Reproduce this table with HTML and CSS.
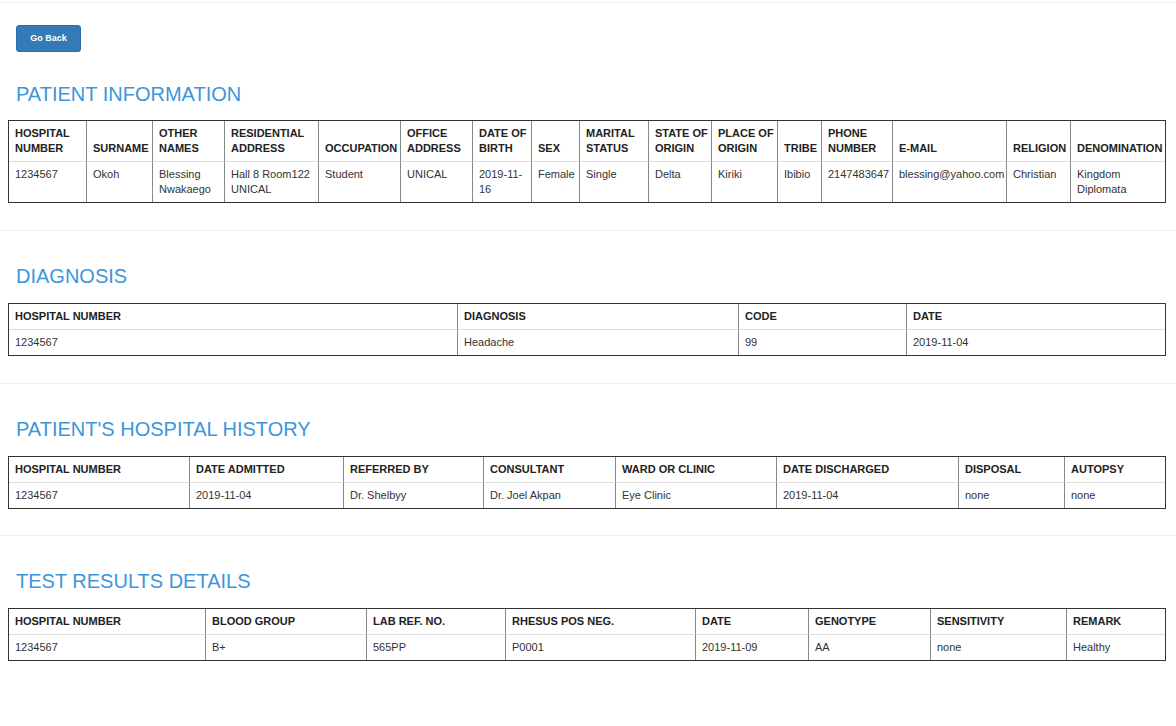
FILE: index.html
```html
<!DOCTYPE html>
<html>
<head>
<meta charset="utf-8">
<title>Patient</title>
<link rel="stylesheet" href="styles.css">
</head>
<body>
<hr class="rule rule-top">
<div class="actions"><button class="btn">Go Back</button></div>

<section class="block block-first">
  <h3 class="title">PATIENT INFORMATION</h3>
  <div class="wrap">
    <table class="grid info">
      <thead><tr>
        <th class="c1">HOSPITAL<br>NUMBER</th><th class="c2">SURNAME</th><th class="c3">OTHER<br>NAMES</th><th class="c4">RESIDENTIAL<br>ADDRESS</th><th class="c5">OCCUPATION</th><th class="c6">OFFICE<br>ADDRESS</th><th class="c7">DATE OF<br>BIRTH</th><th class="c8">SEX</th><th class="c9">MARITAL<br>STATUS</th><th class="c10">STATE OF<br>ORIGIN</th><th class="c11">PLACE OF<br>ORIGIN</th><th class="c12">TRIBE</th><th class="c13">PHONE<br>NUMBER</th><th class="c14">E-MAIL</th><th class="c15">RELIGION</th><th class="c16">DENOMINATION</th>
      </tr></thead>
      <tbody><tr>
        <td>1234567</td><td>Okoh</td><td>Blessing<br>Nwakaego</td><td>Hall 8 Room122<br>UNICAL</td><td>Student</td><td>UNICAL</td><td>2019-11-<br>16</td><td>Female</td><td>Single</td><td>Delta</td><td>Kiriki</td><td>Ibibio</td><td>2147483647</td><td>blessing@yahoo.com</td><td>Christian</td><td>Kingdom<br>Diplomata</td>
      </tr></tbody>
    </table>
  </div>
</section>
<hr class="rule">

<section class="block">
  <h3 class="title">DIAGNOSIS</h3>
  <div class="wrap">
    <table class="grid">
      <thead><tr><th class="d1">HOSPITAL NUMBER</th><th class="d2">DIAGNOSIS</th><th class="d3">CODE</th><th class="d4">DATE</th></tr></thead>
      <tbody><tr><td>1234567</td><td>Headache</td><td>99</td><td>2019-11-04</td></tr></tbody>
    </table>
  </div>
</section>
<hr class="rule">

<section class="block block-history">
  <h3 class="title">PATIENT'S HOSPITAL HISTORY</h3>
  <div class="wrap">
    <table class="grid">
      <thead><tr><th class="h1c">HOSPITAL NUMBER</th><th class="h2c">DATE ADMITTED</th><th class="h3c">REFERRED BY</th><th class="h4c">CONSULTANT</th><th class="h5c">WARD OR CLINIC</th><th class="h6c">DATE DISCHARGED</th><th class="h7c">DISPOSAL</th><th class="h8c">AUTOPSY</th></tr></thead>
      <tbody><tr><td>1234567</td><td>2019-11-04</td><td>Dr. Shelbyy</td><td>Dr. Joel Akpan</td><td>Eye Clinic</td><td>2019-11-04</td><td>none</td><td>none</td></tr></tbody>
    </table>
  </div>
</section>
<hr class="rule">

<section class="block">
  <h3 class="title">TEST RESULTS DETAILS</h3>
  <div class="wrap">
    <table class="grid">
      <thead><tr><th class="t1">HOSPITAL NUMBER</th><th class="t2">BLOOD GROUP</th><th class="t3">LAB REF. NO.</th><th class="t4">RHESUS POS NEG.</th><th class="t5">DATE</th><th class="t6">GENOTYPE</th><th class="t7">SENSITIVITY</th><th class="t8">REMARK</th></tr></thead>
      <tbody><tr><td>1234567</td><td>B+</td><td>565PP</td><td>P0001</td><td>2019-11-09</td><td>AA</td><td>none</td><td>Healthy</td></tr></tbody>
    </table>
  </div>
</section>
</body>
</html>
```

FILE: styles.css
```css
html, body {
  margin: 0;
  padding: 0;
  background: #fff;
}
body {
  font-family: "Liberation Sans", Arial, sans-serif;
  font-size: 11px;
  line-height: 15px;
  color: #333;
}
.rule {
  border: 0;
  border-top: 1px solid #eee;
  margin: 0;
  height: 0;
}
.rule-top {
  margin-top: 2px;
}
.actions {
  padding: 22px 16px 0;
}
.btn {
  display: inline-block;
  background: #337ab7;
  border: 1px solid #2e6da4;
  border-radius: 3px;
  color: #fff;
  font-family: "Liberation Sans", Arial, sans-serif;
  font-weight: bold;
  font-size: 9px;
  line-height: 13px;
  height: 27px;
  width: 65px;
  padding: 0;
  margin: 0;
}
.block {
  padding-top: 32px;
  padding-bottom: 27px;
}
.block-first {
  padding-top: 29px;
}
.block-history {
  padding-bottom: 26px;
}
.title {
  margin: 0 0 14px;
  padding-left: 16px;
  font-weight: normal;
  font-size: 20px;
  line-height: 26px;
  color: #3b96dc;
}
.block-first .title {
  margin-bottom: 13px;
}
.wrap {
  margin: 0 10px 0 8px;
}
.grid {
  width: 100%;
  table-layout: fixed;
  border-collapse: separate;
  border-spacing: 0;
  border: 1px solid #333;
}
.grid th,
.grid td {
  box-sizing: border-box;
  padding: 5px 6px;
  text-align: left;
  white-space: nowrap;
  overflow: visible;
  border-left: 1px solid #888;
}
.grid th:first-child,
.grid td:first-child {
  border-left: 0;
}
.grid th {
  vertical-align: bottom;
  font-weight: bold;
  border-bottom: 1px solid #ddd;
  color: #222;
}
.grid td {
  vertical-align: top;
}
.c1 { width: 77px; }
.c2 { width: 66px; }
.c3 { width: 72px; }
.c4 { width: 94px; }
.c5 { width: 82px; }
.c6 { width: 72px; }
.c7 { width: 59px; }
.c8 { width: 48px; }
.c9 { width: 69px; }
.c10 { width: 63px; }
.c11 { width: 66px; }
.c12 { width: 44px; }
.c13 { width: 71px; }
.c14 { width: 114px; }
.c15 { width: 64px; }
.c16 { width: 95px; }
.d1 { width: 448px; }
.d2 { width: 281px; }
.d3 { width: 168px; }
.d4 { width: 259px; }
.h1c { width: 180px; }
.h2c { width: 154px; }
.h3c { width: 140px; }
.h4c { width: 132px; }
.h5c { width: 161px; }
.h6c { width: 182px; }
.h7c { width: 106px; }
.h8c { width: 101px; }
.t1 { width: 196px; }
.t2 { width: 161px; }
.t3 { width: 139px; }
.t4 { width: 190px; }
.t5 { width: 113px; }
.t6 { width: 122px; }
.t7 { width: 136px; }
.t8 { width: 99px; }
```
